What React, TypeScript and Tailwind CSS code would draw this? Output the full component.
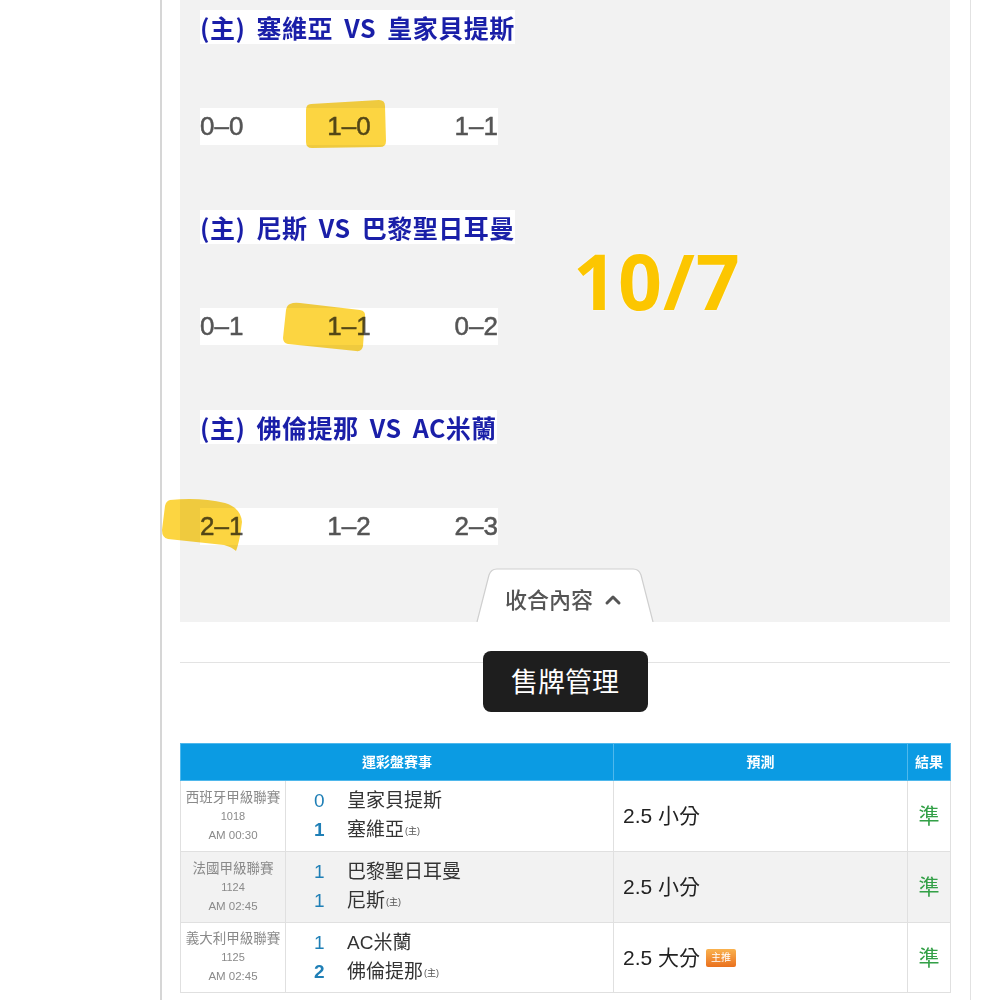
import { ChevronUp } from 'lucide-react'

const games = [
  { title: '(主) 塞維亞 VS 皇家貝提斯', scores: ['0–0', '1–0', '1–1'] },
  { title: '(主) 尼斯 VS 巴黎聖日耳曼', scores: ['0–1', '1–1', '0–2'] },
  { title: '(主) 佛倫提那 VS AC米蘭', scores: ['2–1', '1–2', '2–3'] },
]

const rows = [
  {
    league: '西班牙甲級聯賽',
    code: '1018',
    time: 'AM 00:30',
    away: { score: 0, name: '皇家貝提斯' },
    home: { score: 1, name: '塞維亞' },
    pick: '2.5 小分',
    hot: false,
    bg: 'bg-white',
  },
  {
    league: '法國甲級聯賽',
    code: '1124',
    time: 'AM 02:45',
    away: { score: 1, name: '巴黎聖日耳曼' },
    home: { score: 1, name: '尼斯' },
    pick: '2.5 小分',
    hot: false,
    bg: 'bg-[#f2f2f2]',
  },
  {
    league: '義大利甲級聯賽',
    code: '1125',
    time: 'AM 02:45',
    away: { score: 1, name: 'AC米蘭' },
    home: { score: 2, name: '佛倫提那' },
    pick: '2.5 大分',
    hot: true,
    bg: 'bg-white',
  },
]

function Highlights() {
  // marker strokes drawn over the score rows
  return (
    <svg
      className="pointer-events-none absolute left-0 top-0 overflow-visible mix-blend-multiply"
      width="770"
      height="622"
    >
      <g fill="#fcd02c" opacity="0.9">
        <path d="M131 104 Q126 104 126 110 L126 142 Q126 148 132 148 L200 147 Q206 147 206 141 L205 106 Q205 100 199 100 Z" />
        <path d="M110 304 Q114 302 120 303 L180 310 Q186 311 185 317 L183 346 Q182 352 176 351 L108 344 Q103 343 103 338 L106 310 Q107 305 110 304 Z" />
        <path d="M-10 500 Q20 497 45 503 Q61 508 62 522 L60 536 Q58 546 56 551 Q52 547 44 545 L-12 539 Q-18 538 -18 530 L-15 506 Q-14 501 -10 500 Z" />
      </g>
    </svg>
  )
}

function CollapseTab() {
  return (
    <div className="relative mx-auto mt-auto flex h-[54px] w-[178px] items-center justify-center pt-[10px]">
      <svg className="absolute inset-0" width="178" height="54">
        <path
          d="M1 54 L13 7 Q15 1 21 1 L157 1 Q163 1 165 7 L177 54"
          fill="#ffffff"
          stroke="#cfcfcf"
          strokeWidth="1.2"
        />
      </svg>
      <span className="relative flex items-center gap-[8px] text-[22px] font-medium text-[#555]">
        收合內容
        <ChevronUp size={24} strokeWidth={3} />
      </span>
    </div>
  )
}

export default function App() {
  return (
    <div className="min-h-screen bg-white font-['Liberation_Sans','Noto_Sans_CJK_TC',sans-serif]">
      <div className="ml-[160px] min-h-[1000px] w-[811px] border-l-2 border-r border-l-[#d6d6d6] border-r-[#e2e2e2] pl-[18px] pr-[20px]">
        {/* 預測面板 */}
        <div className="relative flex h-[622px] flex-col bg-[#f2f2f2] pt-[9px]">
          <div className="pl-[20px]">
            {games.map((g, i) => (
              <div key={i} className={i > 0 ? 'mt-[64px]' : ''}>
                <div className="flex h-9 items-center">
                  <span className="inline-block bg-white font-['Noto_Sans_CJK_TC',sans-serif] text-[25px] font-bold leading-[34px] tracking-[0.5px] text-[#1a1fa8] [word-spacing:5px]">
                    {g.title}
                  </span>
                </div>
                <div className="mt-[63px] flex h-[37px] w-[298px] items-center justify-between bg-white text-[26px] text-[#555] [-webkit-text-stroke:0.5px_#555]">
                  {g.scores.map((s) => (
                    <span key={s}>{s}</span>
                  ))}
                </div>
              </div>
            ))}
          </div>

          <Highlights />

          <div className="absolute left-[393px] top-[242px] font-['Open_Sans',sans-serif] text-[77px] font-bold leading-none tracking-[1px] text-[#fcc600] [text-shadow:0_0_2px_#fff]">
            10/7
          </div>

          <CollapseTab />
        </div>

        <div className="mt-[40px] border-t border-[#e3e3e3]" />
        <div className="-mt-[12px] flex justify-center">
          <button className="relative h-[61px] w-[165px] rounded-lg bg-[#1e1e1e] font-['Noto_Sans_CJK_TC',sans-serif] text-[27px] text-white">
            售牌管理
          </button>
        </div>

        {/* 賽事表格 */}
        <table className="mt-[31px] w-[770px] table-fixed border-collapse font-['Liberation_Sans','Noto_Sans_CJK_TC',sans-serif]">
          <colgroup>
            <col className="w-[105px]" />
            <col className="w-[328px]" />
            <col className="w-[294px]" />
            <col className="w-[43px]" />
          </colgroup>
          <thead>
            <tr className="h-[37px] bg-[#0b9be3] text-[14px] font-bold text-white">
              <th colSpan={2} className="border border-[#4fb8ec]">運彩盤賽事</th>
              <th className="border border-[#4fb8ec]">預測</th>
              <th className="border border-[#4fb8ec]">結果</th>
            </tr>
          </thead>
          <tbody>
            {rows.map((r, i) => (
              <tr key={i} className={`${i === 2 ? 'h-[70px]' : 'h-[71px]'} ${r.bg}`}>
                <td className="border border-[#e0e0e0] text-center leading-[19px] text-[#8a8a8a]">
                  <div className="text-[13.5px]">{r.league}</div>
                  <div className="text-[11px]">{r.code}</div>
                  <div className="text-[11.5px]">{r.time}</div>
                </td>
                <td className="border border-[#e0e0e0] pl-[28px]">
                  {[r.away, r.home].map((t, j) => {
                    const other = j === 0 ? r.home : r.away
                    return (
                      <div key={j} className="flex h-[29px] items-center">
                        <span
                          className={`w-[33px] text-[19px] text-[#1f7fb6] ${t.score > other.score ? 'font-bold' : ''}`}
                        >
                          {t.score}
                        </span>
                        <span className="text-[19px] text-[#333]">{t.name}</span>
                        {j === 1 && <span className="ml-[1px] mt-[3px] text-[9px] text-[#555]">(主)</span>}
                      </div>
                    )
                  })}
                </td>
                <td className="border border-[#e0e0e0] pl-[9px] text-[21px] text-[#222]">
                  <span className="inline-flex items-center">
                    {r.pick}
                    {r.hot && (
                      <span className="ml-[6px] inline-flex h-[18px] w-[30px] items-center justify-center rounded-[2px] bg-gradient-to-b from-[#f9b24e] to-[#e9701c] text-[10px] leading-none text-white">
                        主推
                      </span>
                    )}
                  </span>
                </td>
                <td className="border border-[#e0e0e0] text-center text-[21px] text-[#33a047]">準</td>
              </tr>
            ))}
          </tbody>
        </table>
      </div>
    </div>
  )
}
